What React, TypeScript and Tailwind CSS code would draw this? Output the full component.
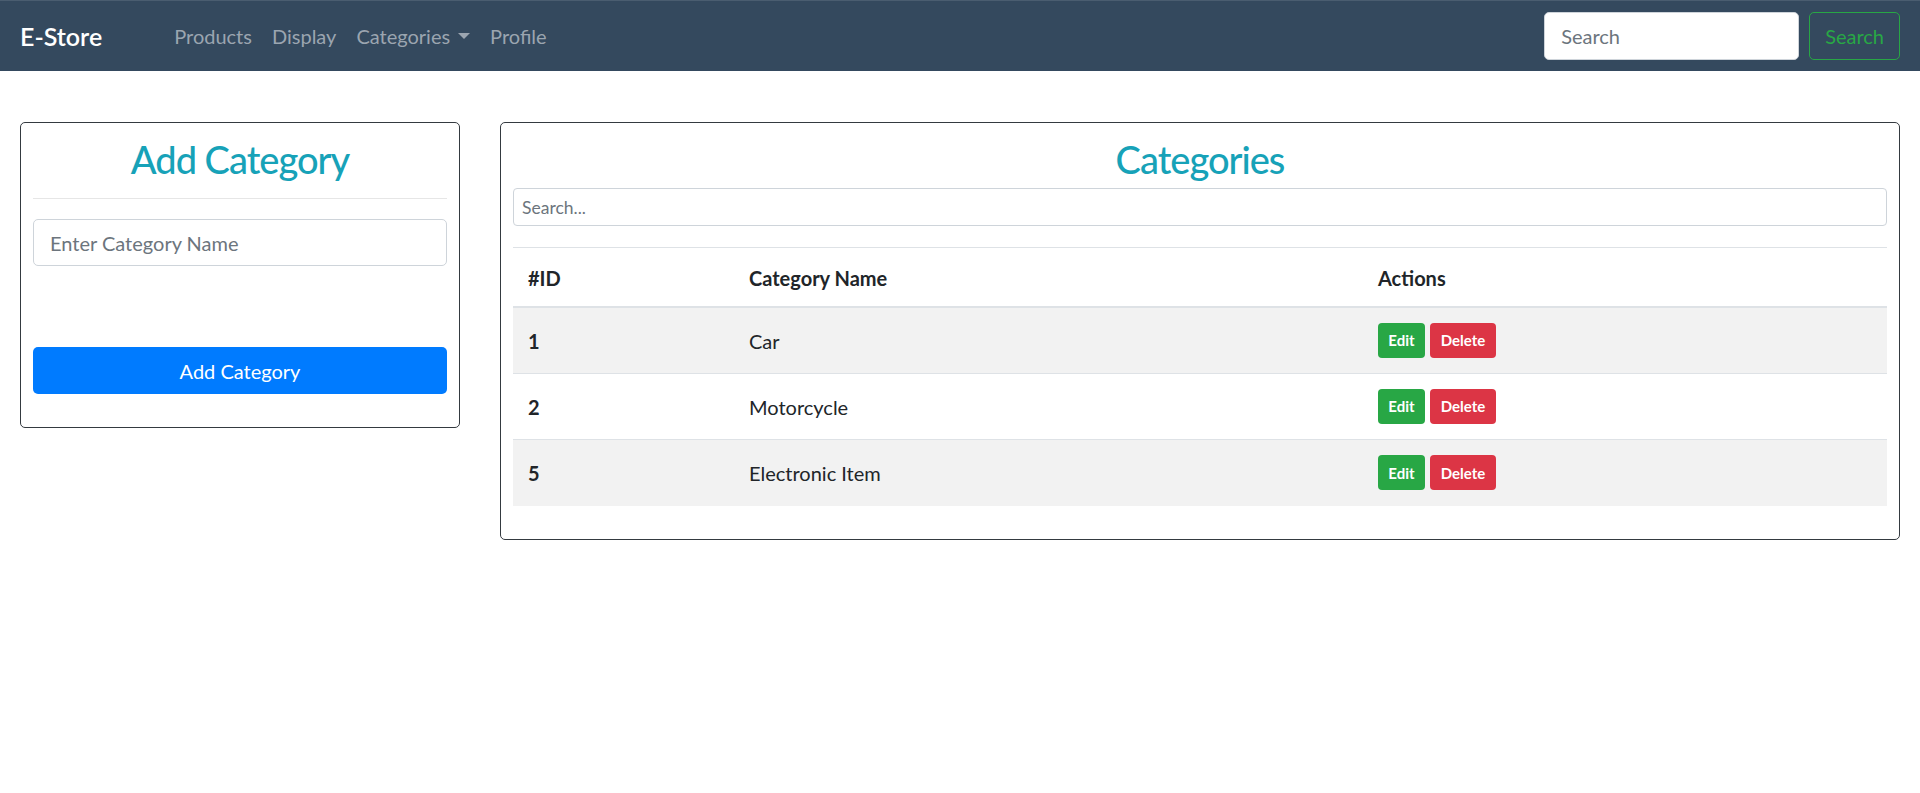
import { useState } from 'react'

const categories = [
  { id: 1, name: 'Car' },
  { id: 2, name: 'Motorcycle' },
  { id: 5, name: 'Electronic Item' },
]

function Navbar() {
  return (
    <nav className="h-[71px] bg-[#34495e] border-t border-[#4a5d70] flex items-center justify-between px-[20px]">
      <div className="flex items-center">
        <a href="#" className="text-white text-[25px] font-semibold mr-[72px] leading-none">
          E-Store
        </a>
        <ul className="flex items-center text-[20px] text-[#9ba5b0]">
          <li className="px-[10px] -ml-[10px]">Products</li>
          <li className="px-[10px]">Display</li>
          <li className="px-[10px] flex items-center">
            Categories
            {/* caret */}
            <span className="ml-[8px] inline-block w-0 h-0 border-l-[6px] border-r-[6px] border-t-[6px] border-l-transparent border-r-transparent border-t-[#9ba5b0]" />
          </li>
          <li className="px-[10px]">Profile</li>
        </ul>
      </div>
      <form className="flex items-center gap-[10px]" onSubmit={(e) => e.preventDefault()}>
        <input
          type="text"
          placeholder="Search"
          className="w-[255px] h-[48px] rounded-[5px] border border-[#ced4da] bg-white px-[16px] text-[20px] text-[#495057] placeholder:text-[#6c757d] outline-none"
        />
        <button className="h-[48px] px-[15px] rounded-[5px] border border-[#28a745] text-[#28a745] text-[20px]">
          Search
        </button>
      </form>
    </nav>
  )
}

function AddCategory() {
  const [name, setName] = useState('')
  return (
    <div className="w-[440px] shrink-0 border border-[#343a40] rounded-[5px] p-[12px] pb-[33px]">
      <h2 className="text-[38px] leading-[48px] tracking-[-1px] text-center text-[#17a2b8] font-medium">Add Category</h2>
      <hr className="mt-[15px] mb-[20px] border-0 border-t border-[#e6e6e6]" />
      <input
        value={name}
        onChange={(e) => setName(e.target.value)}
        placeholder="Enter Category Name"
        className="w-full h-[47px] rounded-[5px] border border-[#ced4da] px-[16px] text-[20px] text-[#495057] placeholder:text-[#6c757d] outline-none"
      />
      <button className="mt-[81px] w-full h-[47px] rounded-[5px] bg-[#007bff] text-white text-[20px]">
        Add Category
      </button>
    </div>
  )
}

function CategoryTable() {
  return (
    <div className="flex-1 border border-[#343a40] rounded-[5px] p-[12px] pb-[33px]">
      <h2 className="text-[38px] leading-[48px] tracking-[-1px] text-center text-[#17a2b8] font-medium">Categories</h2>
      <input
        placeholder="Search..."
        className="mt-[5px] w-full h-[38px] rounded-[4px] border border-[#ced4da] px-[8px] text-[17.5px] text-[#495057] placeholder:text-[#6c757d] outline-none"
      />
      <table className="mt-[21px] w-full text-[20px] text-[#212529] border-collapse">
        <thead>
          <tr className="border-t border-[#dee2e6] border-b-2">
            <th className="w-[221px] text-left font-bold px-[15px] pt-[15px] pb-[13px] leading-[30px]">#ID</th>
            <th className="w-[629px] text-left font-bold px-[15px] pt-[15px] pb-[13px] leading-[30px]">Category Name</th>
            <th className="text-left font-bold px-[15px] pt-[15px] pb-[13px] leading-[30px]">Actions</th>
          </tr>
        </thead>
        <tbody>
          {categories.map((c, i) => (
            <tr key={c.id} className={`border-t border-[#dee2e6] ${i % 2 === 0 ? 'bg-[#f2f2f2]' : ''}`}>
              <th className="text-left font-bold px-[15px] py-[15px] h-[66px]">{c.id}</th>
              <td className="px-[15px] py-[15px]">{c.name}</td>
              <td className="px-[15px] py-[15px]">
                <div className="flex gap-[5px]">
                  <button className="h-[35px] w-[47px] rounded-[4px] bg-[#28a745] text-white text-[15px] font-bold">Edit</button>
                  <button className="h-[35px] w-[66px] rounded-[4px] bg-[#dc3545] text-white text-[15px] font-bold">Delete</button>
                </div>
              </td>
            </tr>
          ))}
        </tbody>
      </table>
    </div>
  )
}

export default function App() {
  return (
    <div className="min-h-screen bg-white font-['Lato',sans-serif]">
      <Navbar />
      <main className="flex items-start gap-[40px] px-[20px] mt-[51px]">
        <AddCategory />
        <CategoryTable />
      </main>
    </div>
  )
}
